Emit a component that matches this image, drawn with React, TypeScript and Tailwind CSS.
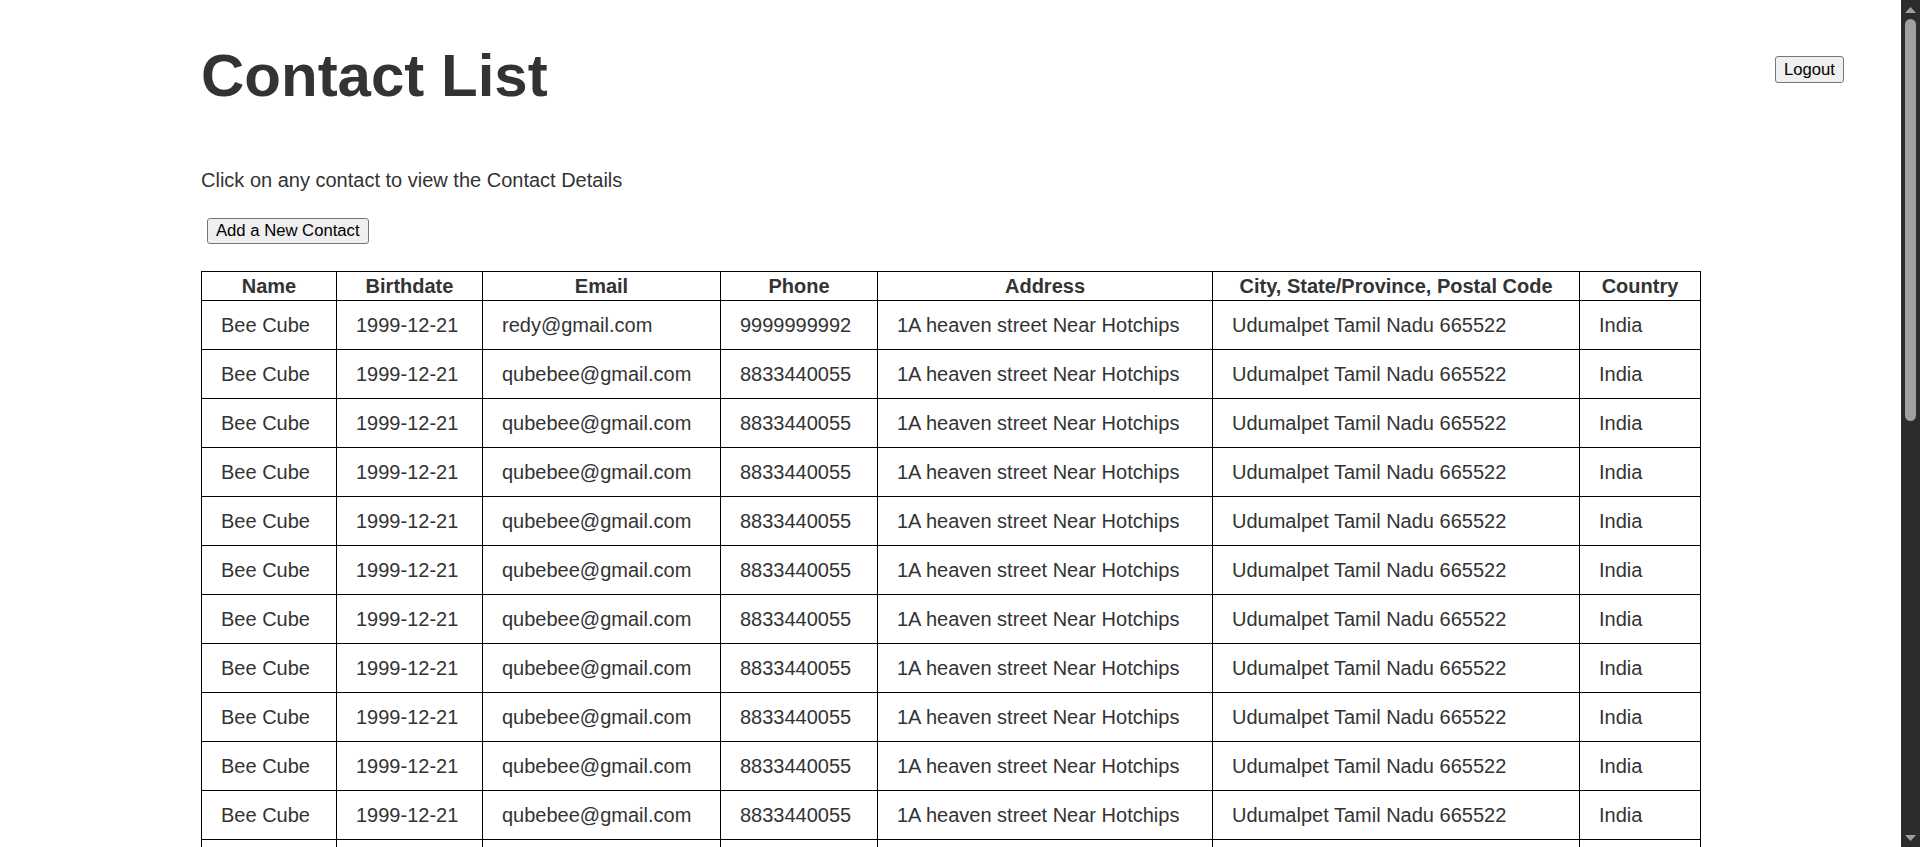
import React from 'react'

type Contact = {
  name: string
  birthdate: string
  email: string
  phone: string
  address: string
  city: string
  country: string
}

const COLUMNS: { label: string; width: string }[] = [
  { label: 'Name', width: 'w-[135px]' },
  { label: 'Birthdate', width: 'w-[146px]' },
  { label: 'Email', width: 'w-[238px]' },
  { label: 'Phone', width: 'w-[157px]' },
  { label: 'Address', width: 'w-[335px]' },
  { label: 'City, State/Province, Postal Code', width: 'w-[367px]' },
  { label: 'Country', width: 'w-[121px]' },
]

const base: Contact = {
  name: 'Bee Cube',
  birthdate: '1999-12-21',
  email: 'qubebee@gmail.com',
  phone: '8833440055',
  address: '1A heaven street Near Hotchips',
  city: 'Udumalpet Tamil Nadu 665522',
  country: 'India',
}

const contacts: Contact[] = [
  { ...base, email: 'redy@gmail.com', phone: '9999999992' },
  ...Array.from({ length: 27 }, () => ({ ...base })),
]

function Button({ children, className }: { children: React.ReactNode; className?: string }) {
  return (
    <button
      type="button"
      className={
        'rounded-[3px] border border-[#767676] bg-[#efefef] px-[8px] py-[2px] text-[16.67px] leading-[20px] text-black ' +
        (className ?? '')
      }
    >
      {children}
    </button>
  )
}

// stand-in for the browser's dark scrollbar seen in the screenshot
function Scrollbar() {
  return (
    <div className="flex h-full w-[19px] shrink-0 flex-col items-center bg-[#2c2c2c]">
      <div className="flex h-[19px] w-full items-center justify-center">
        <svg width="11" height="6" viewBox="0 0 11 6">
          <path d="M5.5 0 L11 6 L0 6 Z" fill="#9f9f9f" />
        </svg>
      </div>
      <div className="flex w-full flex-1 flex-col items-center">
        <div className="h-[402px] w-[11px] rounded-full bg-[#a0a0a0]" />
      </div>
      <div className="flex h-[19px] w-full items-center justify-center">
        <svg width="11" height="6" viewBox="0 0 11 6">
          <path d="M0 0 L11 0 L5.5 6 Z" fill="#9f9f9f" />
        </svg>
      </div>
    </div>
  )
}

export default function App() {
  return (
    <div className="flex h-screen overflow-hidden bg-white">
      <div className="min-w-0 flex-1 overflow-y-auto [scrollbar-width:none]">
        <div className="pb-[32px] font-['Liberation_Sans',Arial,sans-serif] text-[#333]">
          <div className="flex items-start justify-between pl-[201px] pr-[57px]">
            <h1 className="mt-[41px] text-[60px] font-bold leading-[69px]">Contact List</h1>
            <Button className="mt-[56px] h-[27px]">Logout</Button>
          </div>

          <p className="mt-[59px] pl-[201px] text-[20px] leading-[23px]">
            Click on any contact to view the Contact Details
          </p>

          <div className="mt-[26px] pl-[207px]">
            <Button className="h-[26px]">Add a New Contact</Button>
          </div>

          <table className="ml-[201px] mt-[27px] w-[1499px] table-fixed border-collapse border border-black text-[20px] leading-[22px]">
            <colgroup>
              {COLUMNS.map((c) => (
                <col key={c.label} className={c.width} />
              ))}
            </colgroup>
            <thead>
              <tr>
                {COLUMNS.map((c) => (
                  <th key={c.label} className="border border-black py-[3px] text-center font-bold">
                    {c.label}
                  </th>
                ))}
              </tr>
            </thead>
            <tbody>
              {contacts.map((c, i) => (
                <tr key={i}>
                  <td className="border border-black px-[19px] py-[13px]">{c.name}</td>
                  <td className="border border-black px-[19px] py-[13px]">{c.birthdate}</td>
                  <td className="border border-black px-[19px] py-[13px]">{c.email}</td>
                  <td className="border border-black px-[19px] py-[13px]">{c.phone}</td>
                  <td className="border border-black px-[19px] py-[13px]">{c.address}</td>
                  <td className="border border-black px-[19px] py-[13px]">{c.city}</td>
                  <td className="border border-black px-[19px] py-[13px]">{c.country}</td>
                </tr>
              ))}
            </tbody>
          </table>
        </div>
      </div>
      <Scrollbar />
    </div>
  )
}
